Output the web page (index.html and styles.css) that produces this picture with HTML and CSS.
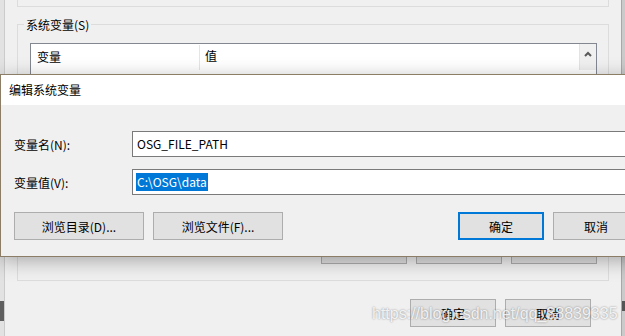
FILE: index.html
```html
<!DOCTYPE html>
<html>

<head>
  <title>编辑系统变量</title>
  <link rel="stylesheet" href="styles.css">
</head>

<body>
  <div class="screen">
    <!-- Left edge of the desktop behind the window -->
    <div class="edge-left"><span class="edge-mark"></span></div>

    <!-- Environment variables window (background) -->
    <div class="window">
      <div class="group-top"></div>

      <fieldset class="group">
        <legend>系统变量(S)</legend>
        <div class="listview">
          <div class="list-header">
            <div class="col col-name">变量</div>
            <div class="col col-value">值</div>
            <div class="scroll-up">
              <svg width="8" height="6" viewBox="0 0 8 6"><path d="M1 5 L4 2 L7 5" fill="none" stroke="#5a5a5a" stroke-width="2"/></svg>
            </div>
          </div>
        </div>
        <!-- buttons hidden by the dialog, only their bottom edge shows -->
        <div class="group-buttons">
          <button class="btn"></button>
          <button class="btn"></button>
          <button class="btn"></button>
        </div>
      </fieldset>

      <div class="footer-buttons">
        <button class="btn">确定</button>
        <button class="btn">取消</button>
      </div>
    </div>

    <!-- Right edge: scrollbar of the window behind -->
    <div class="edge-right"><span class="edge-mark-right"></span></div>

    <!-- Edit dialog over the window -->
    <div class="dialog">
      <div class="dialog-title">编辑系统变量</div>
      <div class="dialog-body">
        <div class="field-row">
          <label class="field-label">变量名(N):</label>
          <div class="field-input">OSG_FILE_PATH</div>
        </div>
        <div class="field-row">
          <label class="field-label">变量值(V):</label>
          <div class="field-input"><span class="selected">C:\OSG\data</span></div>
        </div>
        <div class="dialog-buttons">
          <button class="btn btn-wide">浏览目录(D)...</button>
          <button class="btn btn-wide">浏览文件(F)...</button>
          <div class="spacer"></div>
          <button class="btn btn-default">确定</button>
          <button class="btn">取消</button>
        </div>
      </div>
    </div>

    <div class="watermark">https://blog.csdn.net/qq_38839335</div>
  </div>
</body>

</html>
```

FILE: styles.css
```css
body {
  margin: 0;
  padding: 0;
  background-color: #f0f0f0;
  font-family: "Noto Sans CJK SC", "Noto Sans", sans-serif;
  font-size: 12px;
  color: #000;
}

.screen {
  position: relative;
  display: flex;
  width: 625px;
  height: 336px;
  overflow: hidden;
}

.edge-left {
  position: relative;
  width: 4px;
  flex: none;
  background-color: #e2e2e2;
  border-right: 1px solid #cbcbcb;
}

.edge-mark {
  position: absolute;
  left: 0;
  top: 301px;
  width: 4px;
  height: 20px;
  background-color: #5f5f5f;
}

.edge-right {
  position: relative;
  width: 3px;
  flex: none;
  background-color: #cacaca;
  border-left: 1px solid #a8a8a8;
}

.edge-mark-right {
  position: absolute;
  left: 0;
  top: 301px;
  width: 3px;
  height: 10px;
  background-color: #555;
}

.window {
  width: 616px;
  flex: none;
}

.group-top {
  margin-left: 12px;
  width: 592px;
  height: 7px;
  box-sizing: border-box;
  border: 1px solid #dcdcdc;
  border-top: none;
}

.group {
  margin: 9px 0 0 12px;
  width: 592px;
  box-sizing: border-box;
  border: 1px solid #dcdcdc;
  padding: 0 0 16px 0;
  min-width: 0;
}

.group legend {
  margin-left: 6px;
  padding: 0 2px;
  line-height: 17px;
}

.listview {
  margin: 10px 0 0 12px;
  width: 567px;
  height: 182px;
  box-sizing: border-box;
  border: 1px solid #828790;
  background-color: #fff;
}

.list-header {
  display: flex;
  height: 26px;
}

.col {
  line-height: 24px;
  padding-left: 6px;
}

.col-name {
  width: 162px;
  border-right: 1px solid #e5e5e5;
  margin-top: 1px;
}

.col-value {
  flex: 1;
  padding-left: 5px;
}

.scroll-up {
  width: 17px;
  background-color: #f0f0f0;
  border-left: 1px solid #e3e3e3;
  display: flex;
  justify-content: center;
  padding-top: 7px;
  box-sizing: border-box;
}

.group-buttons {
  display: flex;
  justify-content: flex-end;
  gap: 9px;
  margin: 11px 11px 0 0;
}

.footer-buttons {
  display: flex;
  justify-content: flex-end;
  gap: 9px;
  margin: 18px 30px 0 0;
}

.btn {
  width: 86px;
  height: 28px;
  box-sizing: border-box;
  background-color: #e1e1e1;
  border: 1px solid #adadad;
  font-family: "Noto Sans CJK SC", "Noto Sans", sans-serif;
  font-size: 12px;
  color: #000;
  padding: 0;
}

.btn-wide {
  width: 130px;
}

.btn-default {
  border: 2px solid #0078d7;
}

/* dialog */
.dialog {
  position: absolute;
  left: 0;
  top: 74px;
  width: 660px;
  height: 183px;
  box-sizing: border-box;
  border: 1px solid #8b7d66;
  background-color: #f0f0f0;
  box-shadow: 0 4px 18px rgba(0, 0, 0, 0.3);
}

.dialog-title {
  height: 30px;
  line-height: 30px;
  padding-left: 8px;
  background-color: #fff;
}

.dialog-body {
  padding: 26px 20px 0 13px;
}

.field-row {
  display: flex;
  align-items: center;
  margin-bottom: 12px;
}

.field-label {
  width: 118px;
  flex: none;
}

.field-input {
  flex: 1;
  height: 26px;
  line-height: 24px;
  box-sizing: border-box;
  border: 1px solid #7a7a7a;
  background-color: #fff;
  padding-left: 4px;
  margin-right: -40px;
}

.selected {
  background-color: #0078d7;
  color: #fff;
  display: inline-block;
  line-height: 18px;
  margin-left: -1px;
  padding: 0 1px;
}

.dialog-buttons {
  display: flex;
  gap: 9px;
  margin-top: 17px;
}

.spacer {
  flex: 1;
}

.watermark {
  position: absolute;
  left: 372px;
  top: 305px;
  font-family: "Liberation Sans", Arial, sans-serif;
  font-size: 16px;
  color: rgba(255, 255, 255, 0.85);
  text-shadow: 0 0 2px rgba(0, 0, 0, 0.45);
}
```
